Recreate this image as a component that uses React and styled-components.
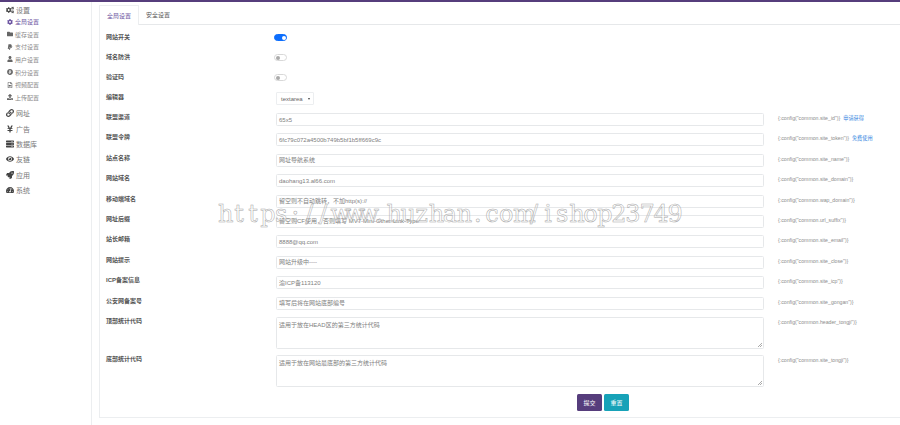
import React from "react";
import styled, { createGlobalStyle } from "styled-components";
import {
  FaCogs,
  FaCog,
  FaFolder,
  FaPaypal,
  FaUser,
  FaBitcoin,
  FaRegFileVideo,
  FaUpload,
  FaLink,
  FaYenSign,
  FaServer,
  FaEye,
  FaRocket,
  FaTachometerAlt,
} from "react-icons/fa";

const CJK = `"Liberation Sans", "Noto Sans CJK SC", sans-serif`;

const GlobalStyle = createGlobalStyle`
  html, body { margin: 0; padding: 0; background: #fff; }
  body { font-family: ${CJK}; width: 900px; height: 425px; overflow: hidden; }
  * { box-sizing: border-box; }
`;

const Page = styled.div`
  position: relative;
  width: 900px;
  height: 425px;
  border-top: 2px solid #563d7c;
  display: flex;
`;

const Sidebar = styled.nav`
  width: 92px;
  height: 423px;
  flex: none;
  border-right: 1px solid #eceef0;
`;

const MainItem = styled.div`
  height: 15.4px;
  display: flex;
  align-items: center;
  gap: 2px;
  padding-left: 6px;
  font-size: 7px;
  color: #777;
  svg { width: 8px; height: 8px; color: #444; flex: none; }
`;

const SubItem = styled.div`
  height: 12.6px;
  display: flex;
  align-items: center;
  gap: 2.5px;
  padding-left: 6.5px;
  font-size: 6px;
  color: ${(p) => (p.$active ? "#6a52a0" : "#8a8a8a")};
  svg { width: 6px; height: 6px; color: ${(p) => (p.$active ? "#6a52a0" : "#666")}; flex: none; }
`;

const SubList = styled.div`
  margin: -2px 0 2px;
`;

const Content = styled.main`
  flex: 1;
  padding: 3px 0 0 7px;
`;

const Card = styled.section`
  height: 413px;
  border: 1px solid #eceef0;
  border-right: none;
  border-top: none;
`;

const Tabs = styled.div`
  height: 20px;
  display: flex;
  margin-left: -1px;
  border-bottom: 1px solid #e6e8ea;
`;

const Tab = styled.div`
  height: ${(p) => (p.$active ? "20px" : "19px")};
  padding: 0 7px;
  display: flex;
  align-items: center;
  white-space: nowrap;
  font-size: 6px;
  background: #fff;
  color: ${(p) => (p.$active ? "#6a52a0" : "#555")};
  border: ${(p) => (p.$active ? "1px solid #eceef0" : "none")};
  border-bottom: none;
`;

const Form = styled.form`
  padding: 8px 0 0 6px;
`;

const Row = styled.div`
  display: grid;
  grid-template-columns: 170px 488px 1fr;
  min-height: ${(p) => p.$height || 20}px;
`;

const Label = styled.label`
  font-size: 6px;
  font-weight: 700;
  color: #555;
  line-height: 8px;
`;

const Switch = styled.span`
  position: relative;
  display: block;
  width: 13px;
  height: 7px;
  margin: 1px 0 0 -2px;
  border-radius: 4px;
  background: ${(p) => (p.$on ? "#0d6efd" : "#fff")};
  border: 1px solid ${(p) => (p.$on ? "#0d6efd" : "#d8d8d8")};
  &::after {
    content: "";
    position: absolute;
    top: 0.5px;
    left: ${(p) => (p.$on ? "6.5px" : "0.5px")};
    width: 4px;
    height: 4px;
    border-radius: 50%;
    background: ${(p) => (p.$on ? "#fff" : "#aaa")};
  }
`;

const Select = styled.div`
  width: 38px;
  height: 13px;
  margin-top: -1px;
  border: 1px solid #eceef0;
  border-radius: 1px;
  display: flex;
  align-items: center;
  justify-content: space-between;
  padding: 0 3px 0 4px;
  font-size: 6px;
  color: #666;
  &::after {
    content: "";
    border-top: 2.5px solid #444;
    border-left: 1.5px solid transparent;
    border-right: 1.5px solid transparent;
  }
`;

const Field = styled.div`
  width: 488px;
  height: ${(p) => p.$height || 13}px;
  border: 1px solid #e6e8ea;
  border-radius: 1.5px;
  padding: ${(p) => (p.$height ? "3px" : "0")} 2px 0;
  display: flex;
  align-items: ${(p) => (p.$height ? "flex-start" : "center")};
  font-size: 6px;
  line-height: 8px;
  color: #808080;
  white-space: nowrap;
  position: relative;
  ${(p) =>
    p.$height
      ? `&::after {
    content: "";
    position: absolute;
    right: 1px;
    bottom: 1px;
    width: 4px;
    height: 4px;
    background: linear-gradient(135deg, transparent 50%, #aaa 50%, #aaa 60%, transparent 60%, transparent 75%, #aaa 75%, #aaa 85%, transparent 85%);
  }`
      : ""}
`;

const Hint = styled.div`
  font-size: 5.2px;
  line-height: 8px;
  color: #8c8c8c;
  padding: 1px 0 0 14px;
  white-space: nowrap;
`;

const HintLink = styled.a`
  color: #2f7fe0;
  margin-left: 3px;
`;

const Actions = styled.div`
  display: flex;
  gap: 2px;
  margin: 7px 0 0 471px;
`;

const Button = styled.button`
  width: 25px;
  height: 17px;
  padding: 0;
  border: none;
  border-radius: 1.5px;
  font-family: inherit;
  font-size: 6px;
  color: #fff;
  background: ${(p) => (p.$primary ? "#563d7c" : "#17a2b8")};
`;

const Watermark = styled.div`
  position: absolute;
  top: 197px;
  left: 218px;
  display: flex;
  font-family: "DejaVu Serif", serif;
  font-size: 24px;
  line-height: 30px;
  color: rgba(255, 255, 255, 0.25);
  -webkit-text-stroke: 0.5px #a8a8a8;
  pointer-events: none;
`;

const WatermarkChar = styled.span`
  width: 14.06px;
  text-align: center;
`;

const subItems = [
  { icon: <FaCog />, text: "全局设置", active: true },
  { icon: <FaFolder />, text: "缓存设置" },
  { icon: <FaPaypal />, text: "支付设置" },
  { icon: <FaUser />, text: "用户设置" },
  { icon: <FaBitcoin />, text: "积分设置" },
  { icon: <FaRegFileVideo />, text: "视频配置" },
  { icon: <FaUpload />, text: "上传配置" },
];

const mainItems = [
  { icon: <FaLink />, text: "网址" },
  { icon: <FaYenSign />, text: "广告" },
  { icon: <FaServer />, text: "数据库" },
  { icon: <FaEye />, text: "友链" },
  { icon: <FaRocket />, text: "应用" },
  { icon: <FaTachometerAlt />, text: "系统" },
];

const fields = [
  { label: "联盟渠道", value: "65x5", hint: `{:config("common.site_id")}`, link: "申请获得" },
  { label: "联盟令牌", value: "6fc79c072a4500b749b5bf1b5ff669c9c", hint: `{:config("common.site_token")}`, link: "免费使用" },
  { label: "站点名称", value: "网址导航系统", hint: `{:config("common.site_name")}` },
  { label: "网站域名", value: "daohang13.al66.com", hint: `{:config("common.site_domain")}` },
  { label: "移动端域名", value: "留空则不自动跳转，不加http(s)://", hint: `{:config("common.wap_domain")}` },
  { label: "网址后缀", value: "留空则CF使用，否则填写 MVT-Mini-Other-Link-Type", hint: `{:config("common.url_suffix")}` },
  { label: "站长邮箱", value: "8888@qq.com", hint: `{:config("common.site_email")}` },
  { label: "网站提示", value: "网站升级中----", hint: `{:config("common.site_close")}` },
  { label: "ICP备案信息", value: "渝ICP备113120", hint: `{:config("common.site_icp")}` },
  { label: "公安网备案号", value: "填写后将在网站底部编号", hint: `{:config("common.site_gongan")}` },
];

export default function App() {
  return (
    <>
      <GlobalStyle />
      <Page>
        <Sidebar>
          <MainItem>
            <FaCogs />
            设置
          </MainItem>
          <SubList>
            {subItems.map((item) => (
              <SubItem key={item.text} $active={item.active}>
                {item.icon}
                {item.text}
              </SubItem>
            ))}
          </SubList>
          {mainItems.map((item) => (
            <MainItem key={item.text}>
              {item.icon}
              {item.text}
            </MainItem>
          ))}
        </Sidebar>
        <Content>
          <Card>
            <Tabs>
              <Tab $active>全局设置</Tab>
              <Tab>安全设置</Tab>
            </Tabs>
            <Form>
              <Row>
                <Label>网站开关</Label>
                <Switch $on />
              </Row>
              <Row>
                <Label>域名防洪</Label>
                <Switch />
              </Row>
              <Row>
                <Label>验证码</Label>
                <Switch />
              </Row>
              <Row>
                <Label>编辑器</Label>
                <Select>textarea</Select>
              </Row>
              {fields.map((f) => (
                <Row key={f.label} $height={20.4}>
                  <Label>{f.label}</Label>
                  <Field>{f.value}</Field>
                  <Hint>
                    {f.hint}
                    {f.link && <HintLink>{f.link}</HintLink>}
                  </Hint>
                </Row>
              ))}
              <Row $height={38.5}>
                <Label>顶部统计代码</Label>
                <Field $height={32}>适用于放在HEAD区的第三方统计代码</Field>
                <Hint>{`{:config("common.header_tongji")}`}</Hint>
              </Row>
              <Row $height={32}>
                <Label>底部统计代码</Label>
                <Field $height={32}>适用于放在网站最底部的第三方统计代码</Field>
                <Hint>{`{:config("common.site_tongji")}`}</Hint>
              </Row>
              <Actions>
                <Button type="button" $primary>提交</Button>
                <Button type="button">重置</Button>
              </Actions>
            </Form>
          </Card>
        </Content>
        <Watermark>
          {[..."https://www.huzhan.com/ishop23749"].map((c, i) => (
            <WatermarkChar key={i}>{c}</WatermarkChar>
          ))}
        </Watermark>
      </Page>
    </>
  );
}
